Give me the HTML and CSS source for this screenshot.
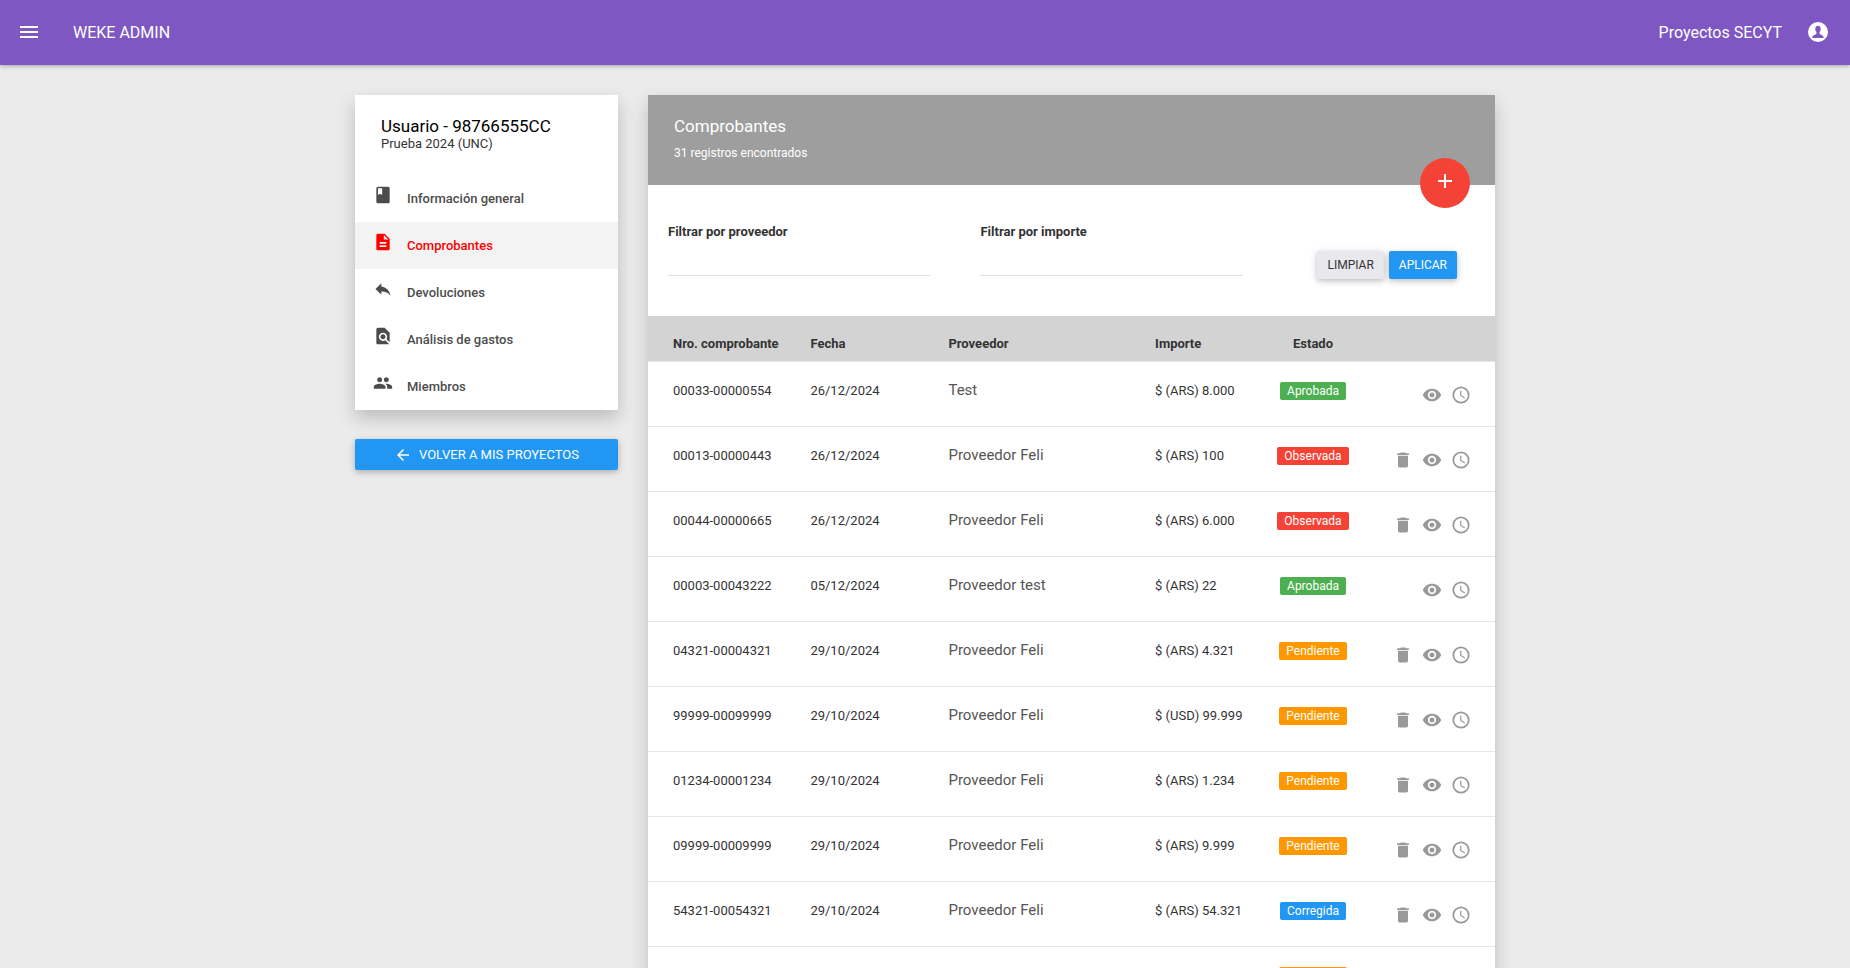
FILE: index.html
```html
<!DOCTYPE html>
<html lang="es">
<head>
    <meta charset="UTF-8">
    <meta name="viewport" content="width=device-width, initial-scale=1.0">
    <title>Weke Admin</title>
    <link rel="stylesheet" href="styles.css">
</head>
<body>
    <svg class="sprite" aria-hidden="true">
        <symbol id="i-menu" viewBox="0 0 24 24"><path d="M3 18h18v-2H3v2zm0-5h18v-2H3v2zm0-7v2h18V6H3z"/></symbol>
        <symbol id="i-account" viewBox="0 0 24 24"><path fill-rule="evenodd" d="M12 2a10 10 0 1 0 0 20 10 10 0 0 0 0-20zM12 5.800c1.700 0 2.700 1.200 2.700 3 0 1.500-.4 2.600-1.100 3.300v1.500c0 .5.4.8.9 1 1.600.5 3.100 1.200 3.100 2.500v.9H6.400v-.9c0-1.300 1.500-2 3.100-2.500.5-.2.9-.5.9-1v-1.500c-.7-.7-1.100-1.800-1.100-3.300 0-1.800 1-3 2.700-3z"/></symbol>
        <symbol id="i-book" viewBox="0 0 24 24"><path d="M18 2H6c-1.100 0-2 .9-2 2v16c0 1.100.9 2 2 2h12c1.100 0 2-.9 2-2V4c0-1.100-.9-2-2-2zM6 4h5v8l-2.500-1.500L6 12V4z"/></symbol>
        <symbol id="i-file" viewBox="0 0 24 24"><path d="M14 2H6c-1.100 0-2 .9-2 2v16c0 1.100.9 2 2 2h12c1.100 0 2-.9 2-2V8l-6-6zm2 16H8v-2h8v2zm0-4H8v-2h8v2zm-3-5V3.500L18.500 9H13z"/></symbol>
        <symbol id="i-reply" viewBox="0 0 24 24"><path d="M10 9V5l-7 7 7 7v-4.100c5 0 8.500 1.600 11 5.100-1-5-4-10-11-11z"/></symbol>
        <symbol id="i-find" viewBox="0 0 24 24"><path d="M20 19.590V8l-6-6H6c-1.100 0-2 .9-2 2v16c0 1.100.9 2 2 2h12c.45 0 .85-.15 1.190-.4l-4.430-4.430c-.8.520-1.740.830-2.760.830-2.760 0-5-2.240-5-5s2.240-5 5-5 5 2.240 5 5c0 1.020-.31 1.960-.83 2.750L20 19.590zM9 13c0 1.660 1.340 3 3 3s3-1.340 3-3-1.340-3-3-3-3 1.340-3 3z"/></symbol>
        <symbol id="i-people" viewBox="0 0 24 24"><path d="M16 11c1.660 0 2.990-1.340 2.990-3S17.660 5 16 5s-3 1.340-3 3 1.340 3 3 3zm-8 0c1.660 0 2.990-1.340 2.990-3S9.660 5 8 5 5 6.340 5 8s1.340 3 3 3zm0 2c-2.330 0-7 1.170-7 3.500V19h14v-2.500c0-2.330-4.670-3.500-7-3.500zm8 0c-.29 0-.62.020-.97.050 1.160.840 1.970 1.970 1.970 3.450V19h6v-2.500c0-2.330-4.670-3.500-7-3.500z"/></symbol>
        <symbol id="i-back" viewBox="0 0 24 24"><path d="M20 11H7.830l5.590-5.590L12 4l-8 8 8 8 1.410-1.410L7.830 13H20v-2z"/></symbol>
        <symbol id="i-plus" viewBox="0 0 24 24"><path d="M19 13h-6v6h-2v-6H5v-2h6V5h2v6h6v2z"/></symbol>
        <symbol id="i-trash" viewBox="0 0 24 24"><path d="M6 19c0 1.100.9 2 2 2h8c1.100 0 2-.9 2-2V7H6v12zM19 4h-3.500l-1-1h-5l-1 1H5v2h14V4z"/></symbol>
        <symbol id="i-eye" viewBox="0 0 24 24"><path d="M12 4.500C7 4.500 2.730 7.610 1 12c1.730 4.390 6 7.500 11 7.500s9.270-3.110 11-7.500c-1.730-4.390-6-7.500-11-7.500zM12 17c-2.760 0-5-2.240-5-5s2.240-5 5-5 5 2.240 5 5-2.240 5-5 5zm0-8c-1.660 0-3 1.340-3 3s1.340 3 3 3 3-1.340 3-3-1.340-3-3-3z"/></symbol>
        <symbol id="i-clock" viewBox="0 0 24 24"><path d="M12 1.700a10.300 10.300 0 1 0 0 20.600 10.300 10.300 0 0 0 0-20.600zm0 18.500a8.200 8.200 0 1 1 0-16.400 8.200 8.200 0 0 1 0 16.400zM12.500 7H11v6l5.200 3.100.8-1.200-4.500-2.700V7z"/></symbol>
    </svg>

    <header class="topbar">
        <button class="icon-btn" type="button" aria-label="Menú"><svg class="icon-lg"><use href="#i-menu"/></svg></button>
        <a class="brand" href="#">WEKE ADMIN</a>
        <a class="project" href="#">Proyectos SECYT</a>
        <button class="icon-btn" type="button" aria-label="Cuenta"><svg class="icon-lg"><use href="#i-account"/></svg></button>
    </header>

    <div class="container">
        <aside class="sidebar">
            <div class="card">
                <div class="card-header">
                    <h2>Usuario - 98766555CC</h2>
                    <p>Prueba 2024 (UNC)</p>
                </div>
                <nav class="menu">
                    <a href="#"><svg class="icon"><use href="#i-book"/></svg>Información general</a>
                    <a href="#" class="active"><svg class="icon"><use href="#i-file"/></svg>Comprobantes</a>
                    <a href="#"><svg class="icon"><use href="#i-reply"/></svg>Devoluciones</a>
                    <a href="#"><svg class="icon"><use href="#i-find"/></svg>Análisis de gastos</a>
                    <a href="#"><svg class="icon"><use href="#i-people"/></svg>Miembros</a>
                </nav>
            </div>
            <a class="btn btn-primary btn-block" href="#"><svg class="icon-sm"><use href="#i-back"/></svg>VOLVER A MIS PROYECTOS</a>
        </aside>

        <main class="card">
            <div class="card-header main-header">
                <h2>Comprobantes</h2>
                <p>31 registros encontrados</p>
                <button class="fab" type="button" aria-label="Agregar"><svg class="icon-lg"><use href="#i-plus"/></svg></button>
            </div>

            <form class="filters">
                <div class="field">
                    <label for="proveedor">Filtrar por proveedor</label>
                    <input type="text" id="proveedor">
                </div>
                <div class="field">
                    <label for="importe">Filtrar por importe</label>
                    <input type="text" id="importe">
                </div>
                <div class="filter-actions">
                    <button class="btn btn-default" type="reset">LIMPIAR</button>
                    <button class="btn btn-primary" type="button">APLICAR</button>
                </div>
            </form>

            <table class="table">
                <thead>
                    <tr>
                        <th class="col-number">Nro. comprobante</th>
                        <th class="col-date">Fecha</th>
                        <th class="col-provider">Proveedor</th>
                        <th class="col-amount">Importe</th>
                        <th class="col-status">Estado</th>
                        <th class="col-actions"></th>
                    </tr>
                </thead>
                <tbody id="rows"></tbody>
            </table>
        </main>
    </div>

    <script src="script.js"></script>
</body>
</html>
```
FILE: styles.css
```css
* {
    box-sizing: border-box;
}
body {
    margin: 0;
    font-family: Roboto, "Liberation Sans", sans-serif;
    font-size: 13px;
    line-height: 20px;
    color: #333;
    background-color: #ebebeb;
}
h2, p {
    margin: 0;
}
a {
    color: inherit;
    text-decoration: none;
}
button, input {
    font-family: inherit;
}
svg {
    display: block;
    flex: none;
    fill: currentColor;
}
.sprite {
    display: none;
}
.icon {
    width: 20px;
    height: 20px;
}
.icon-sm {
    width: 18px;
    height: 18px;
}
.icon-lg {
    width: 24px;
    height: 24px;
}
.icon-btn {
    padding: 0;
    border: none;
    background: none;
    color: inherit;
    cursor: pointer;
}

/* Top bar */
.topbar {
    display: flex;
    align-items: center;
    height: 65px;
    padding: 0 20px 2px 17px;
    font-size: 16px;
    color: #fff;
    background-color: #7e57c2;
    box-shadow: 0 1px 4px rgba(0, 0, 0, 0.3);
}
.topbar a {
    padding-top: 2px;
}
.brand {
    margin-left: 32px;
}
.project {
    margin: 0 24px 0 auto;
}

/* Layout */
.container {
    display: grid;
    grid-template-columns: 263px 1fr;
    gap: 30px;
    align-items: start;
    max-width: 1170px;
    margin: 30px auto;
    padding: 0 15px;
}
.card {
    background-color: #fff;
    box-shadow: 0 8px 17px rgba(0, 0, 0, 0.2);
}
.card-header {
    padding: 22px 26px;
}
.card-header h2 {
    font-size: 17px;
    font-weight: 400;
    line-height: 18px;
    color: #000;
}
.card-header p {
    line-height: 18px;
}

/* Sidebar */
.menu a {
    display: flex;
    align-items: center;
    gap: 14px;
    height: 47px;
    padding-left: 18px;
    font-weight: 500;
    color: #4c4c4c;
}
.menu svg {
    margin-bottom: 8px;
}
.menu a.active {
    color: #f00;
    background-color: #f3f3f3;
}

/* Buttons */
.btn {
    padding: 5px 10px;
    border: none;
    border-radius: 2px;
    font-size: 12px;
    line-height: 18px;
    cursor: pointer;
    box-shadow: 0 2px 5px rgba(0, 0, 0, 0.16), 0 2px 10px rgba(0, 0, 0, 0.12);
}
.btn-default {
    color: #333;
    background-color: #e9e9ed;
}
.btn-primary {
    color: #fff;
    background-color: #2196f3;
}
.btn-block {
    display: flex;
    align-items: center;
    justify-content: center;
    gap: 7px;
    height: 31px;
    margin-top: 29px;
    font-size: 13px;
}

/* Main card */
.main-header {
    position: relative;
    background-color: #9e9e9e;
}
.main-header h2 {
    color: #fff;
}
.main-header p {
    margin-top: 8px;
    font-size: 12px;
    line-height: 20px;
    color: #fff;
}
.fab {
    position: absolute;
    right: 25px;
    bottom: -23px;
    display: flex;
    justify-content: center;
    width: 50px;
    height: 50px;
    padding: 11px 0;
    border: none;
    border-radius: 50%;
    color: #fff;
    background-color: #f44336;
    cursor: pointer;
}
.filters {
    display: grid;
    grid-template-columns: 8fr 8fr 5fr;
    gap: 50px;
    align-items: end;
    padding: 37px 38px 37px 20px;
}
.field {
    padding-bottom: 3px;
}
.field label {
    display: block;
    font-weight: 700;
}
.field input {
    display: block;
    width: 100%;
    height: 34px;
    padding: 6px 0;
    border: none;
    border-bottom: 1px solid #e0e0e0;
    outline: none;
    font-size: 13px;
    background: none;
}
.filter-actions {
    display: flex;
    justify-content: flex-end;
    gap: 5px;
}

/* Table */
.table {
    width: 100%;
    table-layout: fixed;
    border-spacing: 0;
}
.table th {
    padding: 18px 15px 7px;
    font-weight: 700;
    text-align: left;
    background-color: #d3d3d3;
}
.table td {
    height: 65px;
    padding: 19px 15px 0;
    border-top: 1px solid #e6e6e6;
    vertical-align: top;
    white-space: nowrap;
}
.table th:first-child,
.table td:first-child {
    padding-left: 25px;
    padding-right: 0;
}
.table th.col-status,
.table td.status {
    padding-right: 13px;
    text-align: center;
}
.table td.provider {
    padding-top: 18px;
    font-size: 15px;
    color: #555;
}
.table td.actions {
    padding: 23px 24px 0 0;
}
.col-number {
    width: 17.4%;
}
.col-date {
    width: 16.3%;
}
.col-provider {
    width: 24.4%;
}
.col-amount {
    width: 13.7%;
}
.col-status {
    width: 13.2%;
}
.actions div {
    display: flex;
    justify-content: flex-end;
    gap: 9px;
    color: #999;
}
.badge {
    display: inline-block;
    padding: 0 7px;
    border-radius: 2px;
    font-size: 12px;
    line-height: 18px;
    color: #fff;
}
.aprobada {
    background-color: #4caf50;
}
.observada {
    background-color: #f44336;
}
.pendiente {
    background-color: #ff9800;
}
.corregida {
    background-color: #2196f3;
}
```
FILE: script.js
```js
const comprobantes = [
    ['00033-00000554', '26/12/2024', 'Test', '$ (ARS) 8.000', 'Aprobada'],
    ['00013-00000443', '26/12/2024', 'Proveedor Feli', '$ (ARS) 100', 'Observada'],
    ['00044-00000665', '26/12/2024', 'Proveedor Feli', '$ (ARS) 6.000', 'Observada'],
    ['00003-00043222', '05/12/2024', 'Proveedor test', '$ (ARS) 22', 'Aprobada'],
    ['04321-00004321', '29/10/2024', 'Proveedor Feli', '$ (ARS) 4.321', 'Pendiente'],
    ['99999-00099999', '29/10/2024', 'Proveedor Feli', '$ (USD) 99.999', 'Pendiente'],
    ['01234-00001234', '29/10/2024', 'Proveedor Feli', '$ (ARS) 1.234', 'Pendiente'],
    ['09999-00009999', '29/10/2024', 'Proveedor Feli', '$ (ARS) 9.999', 'Pendiente'],
    ['54321-00054321', '29/10/2024', 'Proveedor Feli', '$ (ARS) 54.321', 'Corregida'],
    ['01111-00001111', '29/10/2024', 'Proveedor Feli', '$ (ARS) 1.111', 'Pendiente']
];

function action(icon, label) {
    return `<button class="icon-btn" type="button" aria-label="${label}"><svg class="icon"><use href="#i-${icon}"/></svg></button>`;
}

// Approved receipts can no longer be deleted
document.getElementById('rows').innerHTML = comprobantes.map(([number, date, provider, amount, status]) => `
    <tr>
        <td>${number}</td>
        <td>${date}</td>
        <td class="provider">${provider}</td>
        <td>${amount}</td>
        <td class="status"><span class="badge ${status.toLowerCase()}">${status}</span></td>
        <td class="actions"><div>
            ${status === 'Aprobada' ? '' : action('trash', 'Eliminar')}
            ${action('eye', 'Ver')}
            ${action('clock', 'Historial')}
        </div></td>
    </tr>`).join('');
```
